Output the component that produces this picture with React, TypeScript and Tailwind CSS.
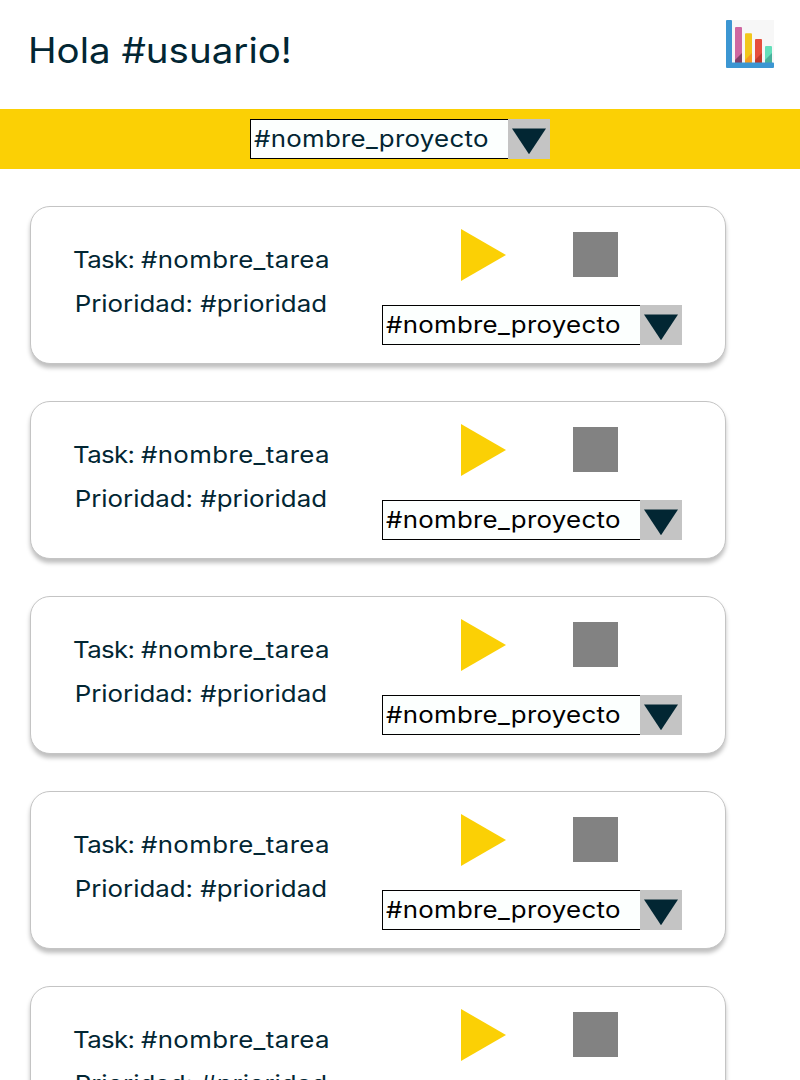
const tasks = [1, 2, 3, 4, 5];

function ProjectSelect({ textColor }: { textColor: string }) {
  return (
    <div className="flex h-10 w-[300px]">
      <div
        className={`flex h-10 w-[258px] items-center border border-r-0 border-black bg-[#fcfffe] pl-[3px] text-[23.5px] leading-none font-normal ${textColor}`}
      >
        <span className="origin-left scale-x-110 tracking-[0.25px] whitespace-nowrap">#nombre_proyecto</span>
      </div>
      <div className="flex h-10 w-[42px] justify-center bg-[#c4c4c4] pt-[9px]">
        <svg className="h-[27px] w-[34px]" viewBox="0 0 34 27">
          <path d="M0 0.5H34L17 26.3Z" fill="#022633" />
        </svg>
      </div>
    </div>
  );
}

function TaskCard() {
  return (
    <article className="flex h-[158px] w-[696px] shrink-0 justify-between rounded-[20px] border border-[#c4c4c4] bg-white pr-[43px] pl-[42px] shadow-[0_4px_4px_rgba(0,0,0,0.25)]">
      <div className="flex origin-left scale-x-110 flex-col pt-[31px] text-[23.5px] leading-[44px] font-normal whitespace-nowrap text-[#022633]">
        <p>
          <span className="tracking-[-0.6px]">Task: </span>
          <span className="tracking-[0.35px]">#nombre_tarea</span>
        </p>
        <p className="pl-[1.5px]">Prioridad: #prioridad</p>
      </div>
      <div className="flex w-[300px] flex-col">
        <div className="flex h-[98px] pt-[22px] pl-[79px]">
          <svg className="h-[52px] w-[45px]" viewBox="0 0 45 52">
            <path d="M0 0L45 26L0 52Z" fill="#fbd005" />
          </svg>
          <div className="mt-[3px] ml-[67px] h-[45px] w-[45px] bg-[#828282]" />
        </div>
        <ProjectSelect textColor="text-black" />
      </div>
    </article>
  );
}

function ChartIcon() {
  return (
    <svg className="h-12 w-12" viewBox="0 0 48 48">
      <rect width="48" height="48" fill="#f7f7f7" />
      <rect x="9" y="7" width="7" height="37" rx="1" fill="#cf67a1" />
      <path d="M9 43V40L16 33V43Z" fill="#824169" />
      <rect x="19" y="13.3" width="7" height="31" rx="1" fill="#f2c71c" />
      <path d="M19 43V40L26 33V43Z" fill="#f59c20" />
      <rect x="29" y="19" width="7" height="25" rx="1" fill="#e64e3c" />
      <path d="M29 43V40L36 33V43Z" fill="#c0392b" />
      <rect x="39" y="26" width="7" height="18" rx="1" fill="#64dfba" />
      <path d="M39 43V40L46 33V43Z" fill="#48b09b" />
      <path d="M1 0H5Q6 0 6 1V42.5H47Q48 42.5 48 43.5V47Q48 48 47 48H1Q0 48 0 47V1Q0 0 1 0Z" fill="#3c96d2" />
    </svg>
  );
}

export default function App() {
  return (
    <div className="flex h-[1080px] w-[800px] flex-col overflow-hidden bg-white font-['Inter',sans-serif]">
      <header className="flex h-[109px] shrink-0 justify-between pt-5 pr-[26px] pl-7">
        <h1 className="h-[60px] origin-left scale-x-110 text-[35px] leading-[60px] font-normal whitespace-nowrap text-[#022633]">Hola #usuario!</h1>
        <ChartIcon />
      </header>
      <div className="flex h-[60px] shrink-0 items-center justify-center bg-[#fbd005]">
        <ProjectSelect textColor="text-[#022633]" />
      </div>
      <main className="flex flex-col gap-[37px] pt-[37px] pl-[30px]">
        {tasks.map((id) => (
          <TaskCard key={id} />
        ))}
      </main>
    </div>
  );
}
